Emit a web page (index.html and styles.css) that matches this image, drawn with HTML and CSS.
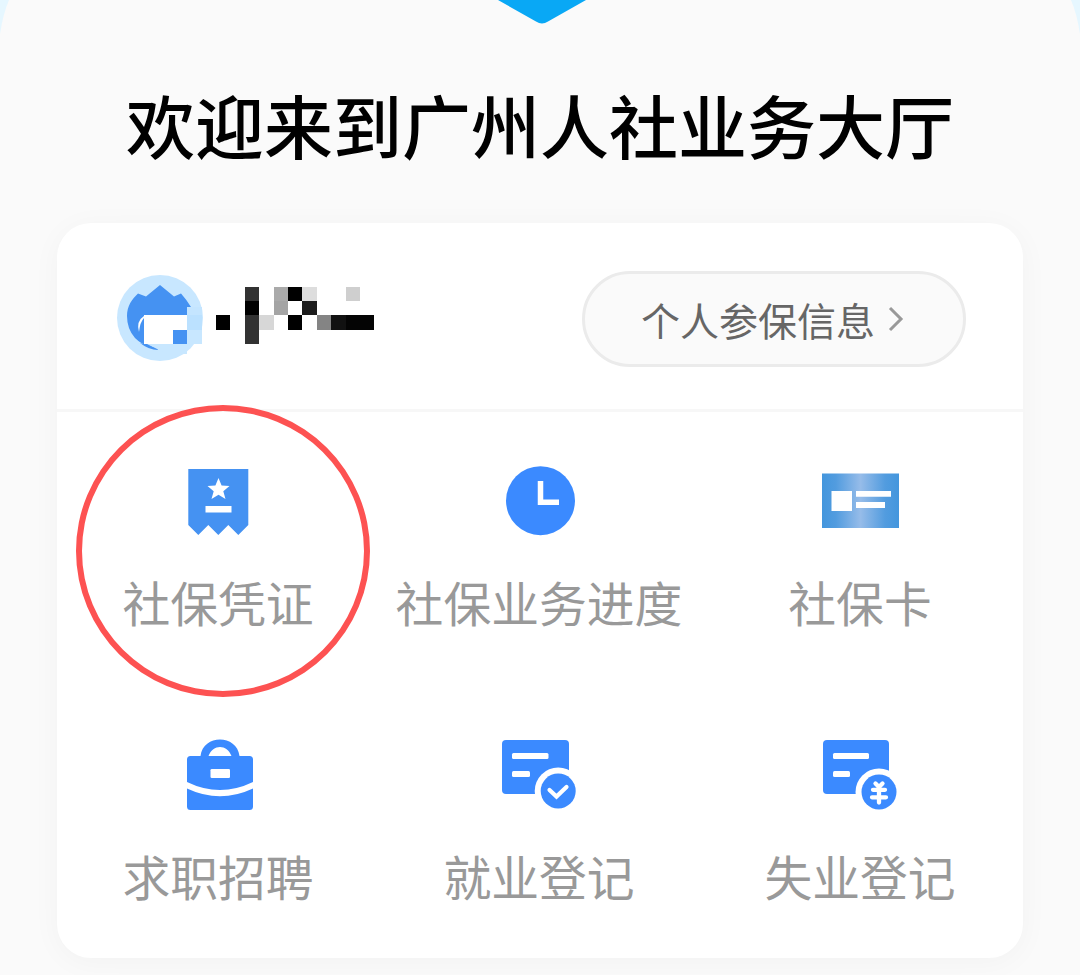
FILE: index.html
```html
<!DOCTYPE html>
<html lang="zh-CN">
<head>
<meta charset="utf-8">
<title>广州人社业务大厅</title>
<link rel="stylesheet" href="styles.css">
</head>
<body>
<main class="page">
  <svg class="banner" viewBox="0 0 1080 40" aria-hidden="true">
    <path d="M0 0H9Q3 14 0 34ZM1080 0H1071Q1077 14 1080 34Z" fill="#e6f7ff"/>
    <path d="M498 0H586L548 21.500Q542 25.500 536 21.500Z" fill="#09a8f5"/>
  </svg>
  <h1 class="title">欢迎来到广州人社业务大厅</h1>
  <section class="card">
    <header class="user">
      <svg class="profile" viewBox="0 0 260 88" aria-hidden="true">
        <circle cx="43" cy="44" r="43" fill="#c8e7ff"/>
        <path d="M21 19.500 29 22.500 43 11 57 22.500 64 19.500Q69 25 74 33V64L57 75.500Q31 77 18 64 10 55 10 42C10 32 15 25 21 19.500Z" fill="#4592f2"/>
        <path d="M27 42Q19 47 22 58Q23 48 27 44Z" fill="#fff"/>
        <path d="M70 33H85V56H70Z" fill="#c4e5ff"/>
        <path d="M70 41H85V56H70Z" fill="#bbe1ff"/>
        <path d="M27 41H70V56H56V70H27Z" fill="#fff"/>
        <path d="M56 56H70V70H56Z" fill="#4592f2"/>
        <path d="M70 56H85V70H70ZM30 70H70V80H52Q40 76 30 70Z" fill="#c8e7ff"/>
        <path d="M27 70Q42 75 41 76Q32 76 23 69Z" fill="#4592f2"/>
        <path d="M99 41h14v15H99zM128 27h14v14h-14zM171 13h14v14h-14zM171 41h14v15h-14z"/>
        <path d="M128 13h14v14h-14zM128 41h14v29h-14z" fill="#323232"/>
        <path d="M142 41h15v15h-15z" fill="#d7d7d7"/>
        <path d="M157 13h14v14h-14z" fill="#aaa"/>
        <path d="M157 27h14v14h-14z" fill="#a4a4a4"/>
        <path d="M185 13h15v14h-15z" fill="#ddd"/>
        <path d="M185 27h15v14h-15z" fill="#1c1c1c"/>
        <path d="M200 41h14v15h-14z" fill="#848484"/>
        <path d="M214 41h15v15h-15z" fill="#111"/>
        <path d="M229 41h28v15h-28z" fill="#040404"/>
        <path d="M229 13h14v14h-14z" fill="#cfcfcf"/>
      </svg>
      <a class="insured">个人参保信息<svg class="chevron" viewBox="0 0 16 26"><path d="M2 2 13 13 2 24" fill="none" stroke="#999" stroke-width="3"/></svg></a>
    </header>
    <nav class="services">
      <a class="service">
        <svg class="icon" viewBox="-1 0 100 100">
          <path d="M18 19H78V75L68 85 58 75 48 85 38 75 28 85 18 75Z" transform="translate(.3)" fill="#4592f2"/>
          <path d="M48 28 51.100 35.500 59 36 52.800 41.200 55 49 48 44.700 41 49 43.200 41.200 37 36 44.900 35.500ZM35 56H61V62.500H35Z" transform="translate(.5)" fill="#fff"/>
        </svg>
        <span class="label">社保凭证</span>
        <span class="marker"></span>
      </a>
      <a class="service">
        <svg class="icon" viewBox="0 0 100 100">
          <circle cx="50.500" cy="50.700" r="34.500" fill="#3b8aff"/>
          <path d="M50.500 31V52.300H69" fill="none" stroke="#fff" stroke-width="5.500"/>
        </svg>
        <span class="label">社保业务进度</span>
      </a>
      <a class="service">
        <svg class="icon" viewBox="1 0 100 100">
          <defs><linearGradient id="sheen"><stop stop-color="#4396dd"/><stop offset=".18" stop-color="#529cdf"/><stop offset=".5" stop-color="#96bce9"/><stop offset=".82" stop-color="#529cdf"/><stop offset="1" stop-color="#4396dd"/></linearGradient></defs>
          <path d="M12 23.500H89V78H12Z" fill="url(#sheen)"/>
          <path d="M21.500 41H42V61H21.500ZM46 41H81V46.700H46ZM46 52H75V58H46Z" fill="#fff"/>
        </svg>
        <span class="label">社保卡</span>
      </a>
      <a class="service">
        <svg class="icon" viewBox="-1 -1 100 100">
          <path d="M20.500 31H30.500C33 9 67 9 69.500 31H79.500Q83 31 83 34.500V57Q50 73 17 57V34.500Q17 31 20.500 31ZM38.500 31H61.500C57 19 43 19 38.500 31Z" fill="#3b8aff" fill-rule="evenodd"/>
          <path d="M17 63.500Q50 79 83 63.500V81.500Q83 85 79.500 85H20.500Q17 85 17 81.500Z" fill="#3b8aff"/>
          <rect x="40.500" y="44" width="19.500" height="9" rx="1.300" fill="#fff"/>
        </svg>
        <span class="label">求职招聘</span>
      </a>
      <a class="service">
        <svg class="icon" viewBox="0 -1 100 100">
          <rect x="12" y="15" width="67" height="54" rx="4" fill="#3b8aff"/>
          <rect x="22" y="28" width="36.500" height="6" rx="1.500" fill="#fff"/>
          <rect x="22" y="46" width="18" height="6" rx="1.500" fill="#fff"/>
          <circle cx="68.200" cy="66" r="23.500" fill="#fff"/>
          <circle cx="68.200" cy="66" r="17.500" fill="#3b8aff"/>
          <path d="M59.500 65 66.500 71.500 76.500 62" fill="none" stroke="#fff" stroke-width="4.200" stroke-linecap="round"/>
        </svg>
        <span class="label">就业登记</span>
      </a>
      <a class="service">
        <svg class="icon" viewBox="1 -1 100 100">
          <rect x="13" y="15" width="66" height="54" rx="4" fill="#3b8aff"/>
          <rect x="23" y="28" width="36" height="6" rx="1.500" fill="#fff"/>
          <rect x="23" y="46" width="17" height="6" rx="1.500" fill="#fff"/>
          <circle cx="69" cy="67" r="23.500" fill="#fff"/>
          <circle cx="69" cy="67" r="17.500" fill="#3b8aff"/>
          <path d="M65.500 58.500 69 62 72.500 58.500M63 64.800H75M62 72.300H76M69 63V77.500" fill="none" stroke="#fff" stroke-width="4.300" stroke-linecap="round"/>
        </svg>
        <span class="label">失业登记</span>
      </a>
    </nav>
  </section>
</main>
</body>
</html>
```
FILE: styles.css
```css
* { box-sizing: border-box; }
body {
  margin: 0;
  background: #fafafa;
  font-family: "Noto Sans CJK SC", sans-serif;
}
.page {
  height: 975px;
  overflow: hidden;
}
.banner {
  display: block;
  width: 1080px;
  height: 40px;
}
.title {
  margin: 34px 0 49px;
  font-size: 69px;
  line-height: 100px;
  font-weight: 500;
  text-align: center;
  white-space: nowrap;
  color: #000;
}
.card {
  width: 966px;
  height: 735px;
  margin: 0 57px;
  border-radius: 34px;
  background: #fff;
  box-shadow: 0 4px 30px rgba(0, 0, 0, .035);
}
.user {
  display: flex;
  justify-content: space-between;
  align-items: flex-start;
  height: 189px;
  padding: 48px 57px 0 60px;
  border-bottom: 3px solid #f7f7f7;
}
.profile {
  width: 260px;
  height: 88px;
  margin-top: 3px;
}
.insured {
  display: flex;
  justify-content: center;
  align-items: center;
  gap: 13px;
  width: 384px;
  height: 96px;
  padding-right: 3px;
  border: 3px solid #ebebeb;
  border-radius: 48px;
  background: #fafafa;
  color: #666;
  font-size: 39px;
}
.chevron {
  width: 16px;
  height: 26px;
}
.services {
  display: grid;
  grid-template-columns: repeat(3, 321px);
  grid-auto-rows: 273.500px;
  padding-top: 38px;
}
.service {
  position: relative;
  display: flex;
  flex-direction: column;
  align-items: center;
  padding-left: 1px;
}
.icon {
  width: 100px;
  height: 100px;
  margin-left: 1px;
}
.label {
  margin-top: 16px;
  font-size: 47.800px;
  line-height: 72px;
  color: #999;
  white-space: nowrap;
}
.marker {
  position: absolute;
  left: 19px;
  top: -45px;
  width: 294px;
  height: 292px;
  border: 6px solid #fd5252;
  border-radius: 50%;
}
```
